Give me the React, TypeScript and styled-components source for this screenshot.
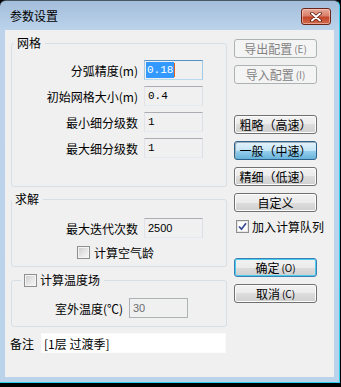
import React from 'react';
import styled, { createGlobalStyle, css } from 'styled-components';

const GlobalStyle = createGlobalStyle`
  html, body {
    margin: 0;
    padding: 0;
    background: #000;
  }
  body {
    font-family: "Noto Sans CJK SC", "Noto Sans", sans-serif;
    font-size: 12px;
    color: #000;
  }
`;

const Window = styled.div`
  width: 340px;
  height: 383px;
  border-right: 1px solid #2fd0ee;
  border-bottom: 1px solid #2fd0ee;
  border-top: 1px solid #4a5866;
  box-sizing: border-box;
  border-radius: 6px 6px 0 0;
  background: linear-gradient(to bottom, #a3bedb 0px, #bcd3eb 30px, #bad2ea 100%);
  display: flex;
  flex-direction: column;
`;

const TitleBar = styled.div`
  height: 29px;
  display: flex;
  align-items: center;
  justify-content: space-between;
  padding: 0 8px 0 10px;
  box-sizing: border-box;
`;

const Title = styled.div`
  font-size: 12px;
  line-height: 14px;
  margin-top: 1px;
`;

const CloseButton = styled.div`
  width: 30px;
  height: 17px;
  margin-top: 2px;
  box-sizing: border-box;
  border: 1px solid #6b2518;
  border-radius: 3px;
  background: linear-gradient(to bottom, #e9a99a 0%, #d8806b 45%, #c4462b 55%, #d06a4e 100%);
  box-shadow: inset 0 0 0 1px rgba(255, 220, 210, 0.5);
  display: flex;
  align-items: center;
  justify-content: center;
`;

const Client = styled.div`
  margin: 0 5px 0 5px;
  height: 347px;
  background: #f0f0f0;
  display: flex;
`;

const LeftCol = styled.div`
  width: 216px;
  padding: 6px 0 0 6px;
  display: flex;
  flex-direction: column;
`;

const Group = styled.fieldset<{ $h: number; $top: number; $pt: number }>`
  margin: ${(p) => p.$top}px 0 0 0;
  height: ${(p) => p.$h}px;
  box-sizing: border-box;
  border: 1px solid #d5dfe5;
  border-radius: 3px;
  padding: ${(p) => p.$pt}px 0 0 0;
  min-width: 0;
  display: flex;
  flex-direction: column;
  gap: 6px;
`;

const Legend = styled.legend<{ $ml: number }>`
  margin-left: ${(p) => p.$ml}px;
  padding: 0 4px 0 3px;
  line-height: 14px;
  font-size: 12px;
  display: flex;
  align-items: center;
  gap: 3px;
`;

const Row = styled.div<{ $pr: number }>`
  height: 20px;
  display: flex;
  align-items: center;
  justify-content: flex-end;
  padding-right: ${(p) => p.$pr}px;
`;

const Label = styled.span`
  margin-right: 6px;
  white-space: nowrap;
`;

const Field = styled.div<{ $state?: 'focus' | 'disabled'; $mono?: boolean }>`
  width: 59px;
  height: 20px;
  box-sizing: border-box;
  border: 1px solid;
  border-color: #abadb3 #dbdfe6 #e3e9ef #e2e3ea;
  background: #f0f0f0;
  display: flex;
  align-items: center;
  padding-left: 3px;
  font-family: ${(p) => (p.$mono ? '"Liberation Mono", monospace' : '"Liberation Sans", sans-serif')};
  font-size: 11px;
  color: #000;
  ${(p) =>
    p.$state === 'focus' &&
    css`
      border-color: #5593c6 #a4c9e3 #b7d9ed #a4c9e3;
      padding-left: 1px;
    `}
  ${(p) =>
    p.$state === 'disabled' &&
    css`
      border-color: #adb2b5;
      color: #6d6d6d;
    `}
`;

const Selected = styled.span`
  background: #3399ff;
  color: #fff;
  padding: 1px 1px;
  line-height: 14px;
`;

const Caret = styled.span`
  display: inline-block;
  width: 1px;
  height: 14px;
  background: #e0601a;
`;

const CheckRow = styled.div<{ $pl?: number }>`
  height: 16px;
  display: flex;
  align-items: center;
  gap: 4px;
  padding-left: ${(p) => p.$pl ?? 0}px;
  white-space: nowrap;
`;

const Box = styled.span`
  width: 13px;
  height: 13px;
  box-sizing: border-box;
  border: 1px solid #8e8f8f;
  background: linear-gradient(135deg, #cbcbcb 0%, #e9e9e9 60%, #f6f6f6 100%);
  box-shadow: inset 0 0 0 1px #f4f4f4;
  display: inline-flex;
  align-items: center;
  justify-content: center;
  flex: none;
`;

const CheckedBox = styled(Box)`
  background: #fff;
  box-shadow: inset 0 0 0 1px #e6e6e6;
`;

const RemarkRow = styled.div`
  margin-top: 6px;
  height: 20px;
  display: flex;
  align-items: center;
  margin-left: -1px;
`;

const RemarkLabel = styled.span`
  width: 31px;
`;

const RemarkField = styled.div`
  width: 185px;
  height: 20px;
  box-sizing: border-box;
  background: #fff;
  border: 1px solid #fbfbfb;
  display: flex;
  align-items: center;
  padding-left: 2px;
`;

const RightCol = styled.div`
  width: 83px;
  margin-left: 7px;
  padding-top: 9px;
  display: flex;
  flex-direction: column;
`;

type Variant = 'normal' | 'disabled' | 'pressed' | 'default';

const Button = styled.div<{ $v?: Variant; $mt?: number }>`
  height: 19px;
  margin-top: ${(p) => p.$mt ?? 7}px;
  box-sizing: border-box;
  border: 1px solid #707070;
  border-radius: 3px;
  background: linear-gradient(to bottom, #f2f2f2 0%, #ebebeb 50%, #dddddd 50%, #cfcfcf 100%);
  box-shadow: inset 0 0 0 1px #fcfcfc;
  display: flex;
  align-items: center;
  justify-content: center;
  line-height: 17px;
  font-size: 12px;
  white-space: nowrap;
  ${(p) =>
    p.$v === 'disabled' &&
    css`
      border-color: #adb2b5;
      background: #f4f4f4;
      box-shadow: none;
      color: #838383;
    `}
  ${(p) =>
    p.$v === 'pressed' &&
    css`
      border-color: #2c628b;
      background: linear-gradient(to bottom, #e5f4fc 0%, #c4e5f6 50%, #98d1ef 50%, #68b3db 100%);
      box-shadow: inset 1px 1px 0 #9eb0ba;
    `}
  ${(p) =>
    p.$v === 'default' &&
    css`
      border-color: #3c7fb1;
      box-shadow: inset 0 0 0 1px #48cdf0;
    `}
`;

const Small = styled.span`
  font-size: 10px;
  margin-left: 2px;
`;

const CheckMark = () => (
  <svg width="9" height="9" viewBox="0 0 9 9">
    <path d="M1 4.5 L3.5 7.2 L8 1.2" fill="none" stroke="#3b4f97" strokeWidth="1.8" />
  </svg>
);

const CloseIcon = () => (
  <svg width="12" height="10" viewBox="0 0 12 10">
    <path d="M2 1.5 L10 8.5 M10 1.5 L2 8.5" stroke="#5a1a10" strokeWidth="3.6" strokeLinecap="round" />
    <path d="M2 1.5 L10 8.5 M10 1.5 L2 8.5" stroke="#fff" strokeWidth="2" strokeLinecap="round" />
  </svg>
);

export default function App() {
  return (
    <>
      <GlobalStyle />
      <Window>
        <TitleBar>
          <Title>参数设置</Title>
          <CloseButton>
            <CloseIcon />
          </CloseButton>
        </TitleBar>
        <Client>
          <LeftCol>
            <Group $h={151} $top={0} $pt={10}>
              <Legend $ml={2}>网格</Legend>
              <Row $pr={23}>
                <Label>分弧精度(m)</Label>
                <Field $state="focus" $mono>
                  <Selected>0.18</Selected>
                  <Caret />
                </Field>
              </Row>
              <Row $pr={23}>
                <Label>初始网格大小(m)</Label>
                <Field $mono>0.4</Field>
              </Row>
              <Row $pr={23}>
                <Label>最小细分级数</Label>
                <Field $mono>1</Field>
              </Row>
              <Row $pr={23}>
                <Label>最大细分级数</Label>
                <Field $mono>1</Field>
              </Row>
            </Group>

            <Group $h={75} $top={5} $pt={12}>
              <Legend $ml={0}>求解</Legend>
              <Row $pr={23}>
                <Label>最大迭代次数</Label>
                <Field>2500</Field>
              </Row>
              <CheckRow $pl={65}>
                <Box />
                计算空气龄
              </CheckRow>
            </Group>

            <Group $h={54} $top={6} $pt={11}>
              <Legend $ml={9}>
                <Box />
                计算温度场
              </Legend>
              <Row $pr={38}>
                <Label>室外温度(℃)</Label>
                <Field $state="disabled">30</Field>
              </Row>
            </Group>

            <RemarkRow>
              <RemarkLabel>备注</RemarkLabel>
              <RemarkField>[1层 过渡季]</RemarkField>
            </RemarkRow>
          </LeftCol>

          <RightCol>
            <Button $v="disabled" $mt={0}>
              导出配置<Small>(E)</Small>
            </Button>
            <Button $v="disabled">
              导入配置<Small>(I)</Small>
            </Button>
            <Button $mt={31}>粗略（高速）</Button>
            <Button $v="pressed">一般（中速）</Button>
            <Button>精细（低速）</Button>
            <Button>自定义</Button>
            <CheckRow style={{ marginTop: 6, gap: 3, paddingLeft: 2 }}>
              <CheckedBox>
                <CheckMark />
              </CheckedBox>
              加入计算队列
            </CheckRow>
            <Button $v="default" $mt={24}>
              确定<Small>(O)</Small>
            </Button>
            <Button>
              取消<Small>(C)</Small>
            </Button>
          </RightCol>
        </Client>
      </Window>
    </>
  );
}
